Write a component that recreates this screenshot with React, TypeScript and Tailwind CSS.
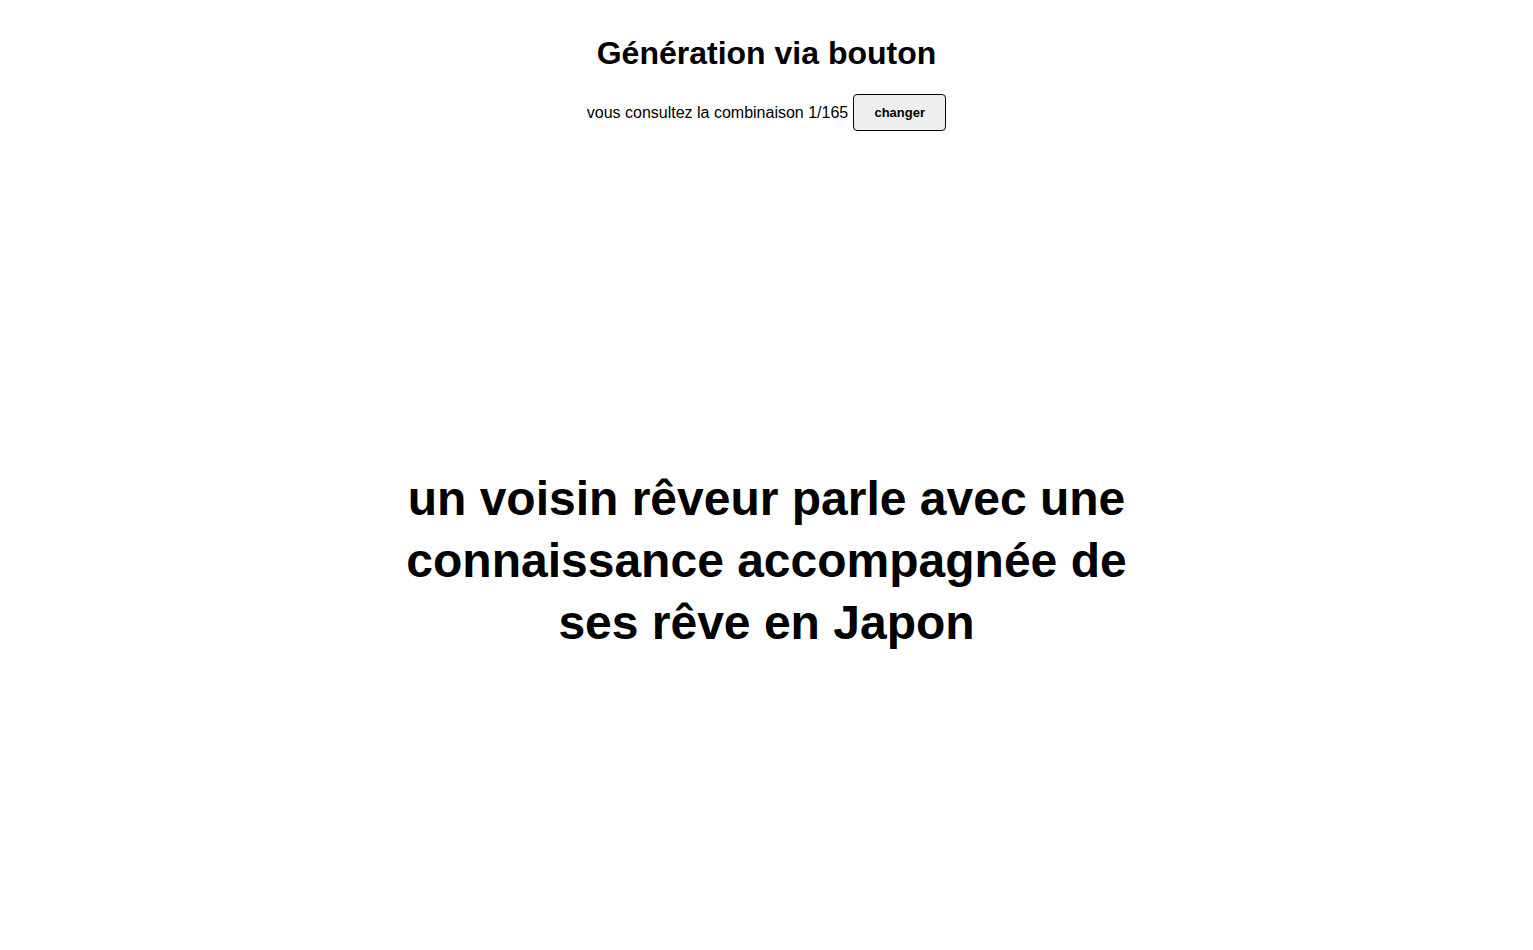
export default function App() {
  return (
    <div className="min-h-screen bg-white text-black font-['Liberation_Sans',Arial,sans-serif]">
      <div className="flex flex-col items-center pt-[35px]">
        <h1 className="text-[32px] font-bold leading-[37px]">Génération via bouton</h1>
        <div className="mt-[22px] flex items-center gap-[5px] text-base">
          <span>vous consultez la combinaison 1/165</span>
          <button className="h-[37px] w-[93px] rounded border border-black bg-[#efefef] text-[13px] font-bold">
            changer
          </button>
        </div>
      </div>
      <div className="flex h-[860px] items-center justify-center">
        <p className="w-1/2 text-center text-[48px] font-bold leading-[62px]">
          un voisin rêveur parle avec une connaissance accompagnée de ses rêve en Japon
        </p>
      </div>
    </div>
  );
}
